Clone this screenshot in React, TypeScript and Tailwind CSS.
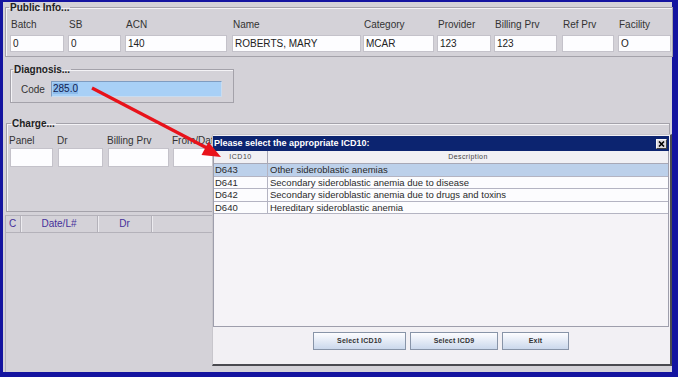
import React from 'react'

const font = { fontFamily: '"Liberation Sans", Arial, sans-serif' }

const publicCols = [
  { label: 'Batch', value: '0', w: 'w-[54px]', col: 'w-[58px]' },
  { label: 'SB', value: '0', w: 'w-[53px]', col: 'w-[57px]' },
  { label: 'ACN', value: '140', w: 'w-[102px]', col: 'w-[107px]' },
  { label: 'Name', value: 'ROBERTS, MARY', w: 'w-[129px]', col: 'w-[131px]' },
  { label: 'Category', value: 'MCAR', w: 'w-[71px]', col: 'w-[74px]' },
  { label: 'Provider', value: '123', w: 'w-[54px]', col: 'w-[57px]' },
  { label: 'Billing Prv', value: '123', w: 'w-[63px]', col: 'w-[68px]' },
  { label: 'Ref Prv', value: '', w: 'w-[52px]', col: 'w-[56px]' },
  { label: 'Facility', value: 'O', w: 'w-[53px]', col: 'w-[54px]' },
]

const chargeCols = [
  { label: 'Panel', w: 'w-[43px]', col: 'w-[48px]' },
  { label: 'Dr', w: 'w-[45px]', col: 'w-[50px]' },
  { label: 'Billing Prv', w: 'w-[61px]', col: 'w-[65px]' },
  { label: 'From/Date', w: 'w-[70px]', col: 'w-[75px]' },
]

const codes = [
  { code: 'D643', desc: 'Other sideroblastic anemias', sel: true },
  { code: 'D641', desc: 'Secondary sideroblastic anemia due to disease', sel: false },
  { code: 'D642', desc: 'Secondary sideroblastic anemia due to drugs and toxins', sel: false },
  { code: 'D640', desc: 'Hereditary sideroblastic anemia', sel: false },
]

const box = 'bg-[#fdfdff] border border-[#c4c2ca] text-[10px] leading-[15px] text-[#222] pl-[2px]'
const fs = 'border border-[#a4a2aa] shadow-[inset_1px_1px_0_#f4f3f6]'

const App = () => {
  return (
    <div className="relative w-[678px] h-[377px] bg-[#1414a0] pt-[2px] pl-[3px] pr-[6px] pb-[5px] overflow-hidden" style={font}>
      <div className="w-full h-full bg-[#d4d2d8] flex flex-col pl-[2px]">

        {/* public info */}
        <fieldset className={fs + ' w-[667px] pl-[4px] pt-[6px] pb-[4px]'}>
          <legend className="-ml-[1px] px-[1px] text-[10px] leading-[11px] font-bold text-[#222]">Public Info...</legend>
          <div className="flex">
            {publicCols.map((c) => (
              <div key={c.label} className={c.col + ' flex flex-col'}>
                <div className="text-[10px] leading-[12px] text-[#333] pl-[1px] h-[16px]">{c.label}</div>
                <div className={box + ' ' + c.w + ' h-[17px]'}>{c.value}</div>
              </div>
            ))}
          </div>
        </fieldset>

        {/* diagnosis */}
        <fieldset className={fs + ' ml-[5px] mt-[7px] w-[224px] pl-[10px] pt-[6px] pb-[5px]'}>
          <legend className="-ml-[8px] px-[1px] text-[10px] leading-[11px] font-bold text-[#222]">Diagnosis...</legend>
          <div className="flex items-center">
            <div className="w-[30px] text-[10px] text-[#333]">Code</div>
            <div className="w-[171px] h-[16px] bg-[#a8d0f6] border border-[#7f9cc0] border-r-[#c8dcf0] border-b-[#c8dcf0] text-[10px] leading-[14px] text-[#102050] pl-[1px]">
              <span className="bg-[#8cbcec]">285.0</span>
            </div>
          </div>
        </fieldset>

        {/* charge */}
        <fieldset className={fs + ' ml-[1px] mt-[15px] w-[664px] pl-[3px] pt-[6px] pb-[44px]'}>
          <legend className="ml-[1px] px-[1px] text-[10px] leading-[11px] font-bold text-[#222]">Charge...</legend>
          <div className="flex">
            {chargeCols.map((c) => (
              <div key={c.label} className={c.col + ' flex flex-col'}>
                <div className="text-[10px] leading-[12px] text-[#333] -ml-[1px] h-[13px]">{c.label}</div>
                <div className={box + ' ' + c.w + ' h-[19px]'}></div>
              </div>
            ))}
          </div>
        </fieldset>

        {/* line items table */}
        <div className="mt-[3px] flex-1 w-[666px] border-l border-t border-[#b4b2ba] flex flex-col">
          <div className="flex h-[17px] border-b border-[#b4b2ba] text-[10px] leading-[16px] text-[#45309a]">
            <div className="w-[15px] pl-[3px] border-r border-[#b4b2ba] shadow-[1px_0_0_#ecebef]">C</div>
            <div className="w-[77px] text-center border-r border-[#b4b2ba] shadow-[1px_0_0_#ecebef]">Date/L#</div>
            <div className="w-[54px] text-center border-r border-[#b4b2ba] shadow-[1px_0_0_#ecebef]">Dr</div>
            <div className="flex-1"></div>
          </div>
          <div className="flex-1"></div>
        </div>
      </div>

      {/* ICD10 dialog */}
      <div className="absolute left-[212px] top-[134px] w-[460px] h-[232px] bg-[#f2f0f4] border-l border-t border-[#c8c6cc] border-r-2 border-b-2 border-r-[#4a4a50] border-b-[#4a4a50] pt-[1px] pr-[1px] flex flex-col">
        <div className="h-[15px] bg-[#0c2470] flex items-center justify-between pl-[1px] pr-[2px]">
          <span className="text-[9px] font-bold text-white leading-[15px]">Please select the appropriate ICD10:</span>
          <div className="w-[11px] h-[10px] bg-[#dcdadf] border border-[#f8f8f8] border-r-[#404040] border-b-[#404040] flex items-center justify-center">
            <svg width="7" height="6" viewBox="0 0 7 6">
              <path d="M1 0.5 L6 5.5 M6 0.5 L1 5.5" stroke="#000" strokeWidth="1.6" />
            </svg>
          </div>
        </div>

        <div className="flex-1 border border-t-0 border-[#9e9eac] bg-[#f5f3f7] flex flex-col">
          <div className="flex h-[13px] bg-[#f1f0f4] border-b border-[#a8a8b6] text-[7px] leading-[12px] text-[#444]">
            <div className="w-[54px] text-center tracking-[0.5px] border-r border-[#a8a8b6]">ICD10</div>
            <div className="flex-1 text-center tracking-[0.4px]">Description</div>
          </div>
          {codes.map((r) => (
            <div key={r.code} className={(r.sel ? 'bg-[#bcd0ea]' : 'bg-[#fcfcfe]') + ' flex h-[12.5px] border-b border-[#b4b4c2] text-[9.5px] leading-[11.5px] text-[#2a2a2a]'}>
              <div className="w-[54px] pl-[1px] border-r border-[#b4b4c2]">{r.code}</div>
              <div className="flex-1 pl-[2px]">{r.desc}</div>
            </div>
          ))}
          <div className="flex-1"></div>
        </div>

        <div className="h-[37px] flex justify-center gap-[4px] pt-[5px]">
          {[
            { t: 'Select ICD10', w: 'w-[93px]' },
            { t: 'Select ICD9', w: 'w-[88px]' },
            { t: 'Exit', w: 'w-[67px]' },
          ].map((b) => (
            <div key={b.t} className={b.w + ' h-[18px] border border-[#8894a8] bg-gradient-to-b from-[#fdfdff] to-[#cbd8ec] text-[7px] font-bold text-[#333] leading-[16px] text-center tracking-[0.2px]'}>
              {b.t}
            </div>
          ))}
        </div>
      </div>

      {/* red pointer arrow */}
      <svg className="absolute left-0 top-0 pointer-events-none" width="678" height="377" viewBox="0 0 678 377">
        <line x1="92" y1="88" x2="207" y2="148" stroke="#e8121a" strokeWidth="3.2" />
        <polygon points="221,157 201.5,155 208.5,142" fill="#e8121a" />
      </svg>
    </div>
  )
}

export default App
